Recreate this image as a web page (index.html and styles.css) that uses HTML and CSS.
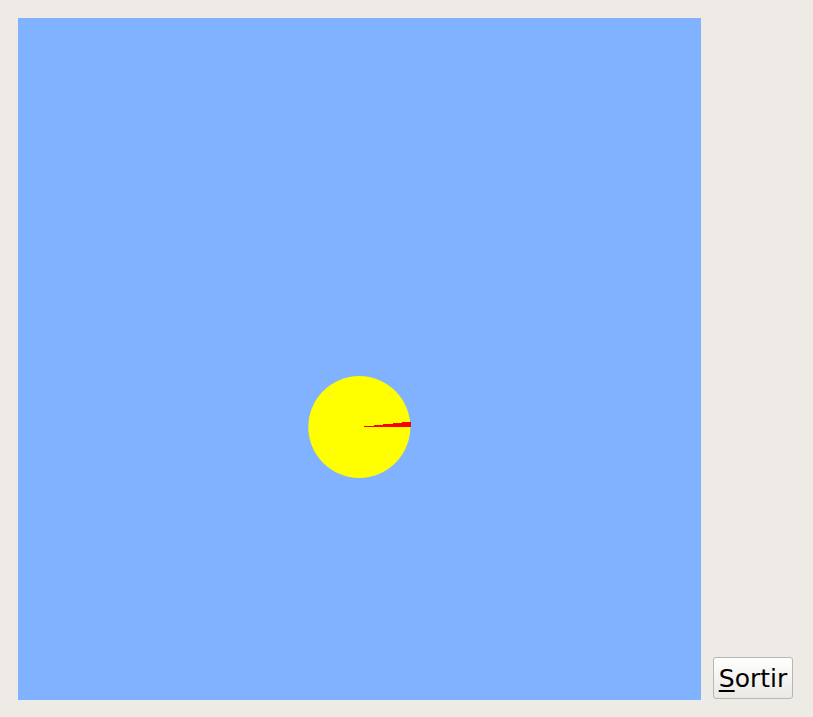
FILE: index.html
```html
<!DOCTYPE html>
<html lang="fr">
<head>
<meta charset="utf-8">
<title>Sortir</title>
<link rel="stylesheet" href="styles.css">
</head>
<body>
<div class="window">
  <div class="canvas">
    <svg class="scene" width="683" height="682" viewBox="0 0 683 682" shape-rendering="crispEdges">
      <circle cx="341.3" cy="409" r="51" fill="#ffff00" shape-rendering="auto"/>
      <polygon points="341.3,409 393,409 393,403.6" fill="#ff0000"/>
    </svg>
  </div>
  <div class="side">
    <button class="btn"><span class="mn">S</span>ortir</button>
  </div>
</div>
</body>
</html>
```
FILE: styles.css
```css
html, body {
  margin: 0;
  padding: 0;
  background: #eeebe7;
  width: 813px;
  height: 717px;
  overflow: hidden;
}
.window {
  display: flex;
  padding: 18px 20px 17px 18px;
  gap: 12px;
  align-items: stretch;
}
.canvas {
  width: 683px;
  height: 682px;
  background: #80b2ff;
  flex: none;
}
.scene {
  display: block;
}
.side {
  display: flex;
  flex-direction: column;
  justify-content: flex-end;
  padding-bottom: 1px;
}
.btn {
  width: 80px;
  height: 42px;
  margin: 0;
  padding: 2px 0 0 0;
  font-family: "DejaVu Sans", sans-serif;
  font-size: 25px;
  color: #000;
  border: 1px solid #b9b5b0;
  border-radius: 3px;
  background: linear-gradient(#ffffff, #ebe8e5);
  line-height: 38px;
  white-space: nowrap;
}
.mn {
  text-decoration: underline;
  text-underline-offset: 3px;
  text-decoration-thickness: 2px;
}
```
